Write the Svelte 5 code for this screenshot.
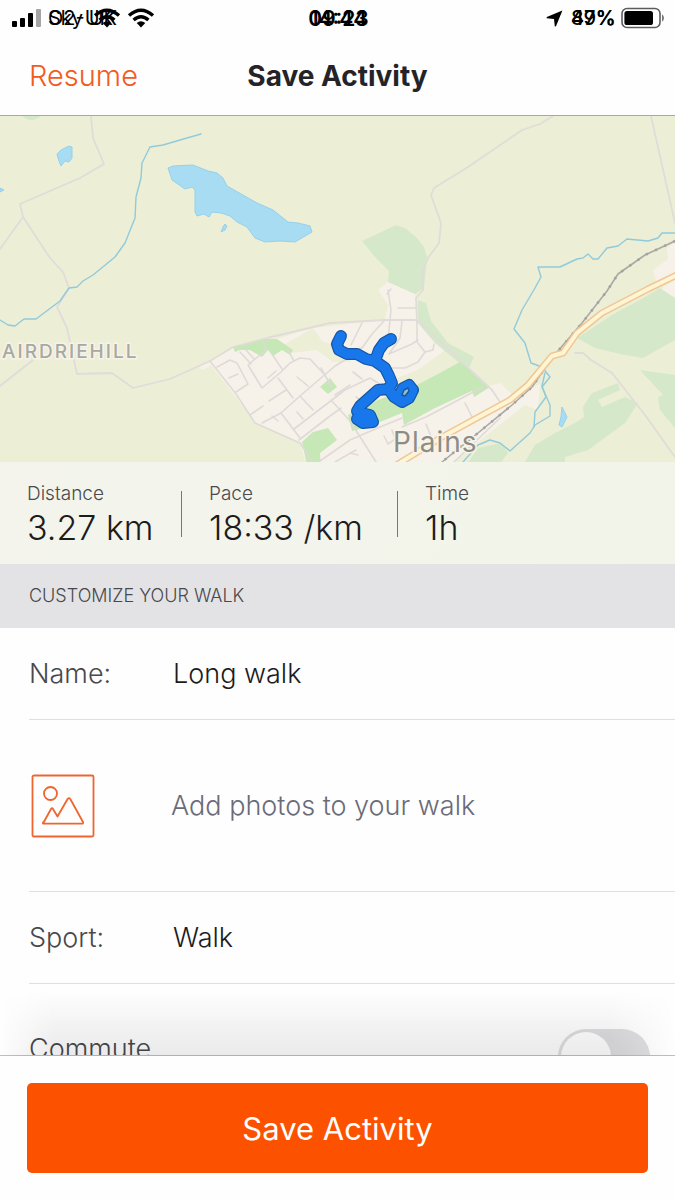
<script>
  let name = $state('Long walk');
  let commute = $state(false);

  const stats = [
    { label: 'Distance', value: '3.27 km' },
    { label: 'Pace', value: '18:33 /km' },
    { label: 'Time', value: '1h' }
  ];

  const streets = [
    'M210 361 236 394 255 423 300 443 318 470',
    'M217 367 230 360 237 363 248 384 236 392',
    'M229 378 238 374',
    'M240 352 251 364M246 350 254 359',
    'M263 339 266 350 248 365 262 388 281 372 290 363 300 358 310 359 323 373',
    'M268 378 276 371M272 354 282 369M288 350 294 361',
    'M262 423 281 413 300 396 335 366 350 357',
    'M278 378 293 398M297 377 308 386M269 401 286 390',
    'M250 415 263 406M300 396 313 410',
    'M281 413 300 438M294 429 345 390 370 378 386 388',
    'M299 440 330 416 341 408M331 400 350 421 376 462',
    'M297 412 303 419M321 368 331 386M272 416 278 421',
    'M320 461 350 440 380 427 402 418',
    'M335 395 350 385M353 372 362 379M356 397 364 403',
    'M388 340 391 310 388 290M398 308H416M391 289 387 294',
    'M384 321 372 334 362 348 350 350M362 323 351 345',
    'M402 321 400 338 389 354 412 344 418 340',
    'M417 322 417 342 425 352 433 350 434 344',
    'M390 368 405 368 418 362 425 352',
    'M384 436 388 444 397 438M392 430 396 441',
    'M426 424 432 439M465 403 472 417M492 390 500 402',
    'M402 427 426 417 483 387',
    'M335 462 356 450M350 453 358 455 M454 462 500 418'
  ];

  const route =
    'M341 336 337 344 339 350 347 354 357 354 366 359 375 361 379 350 384 343 391 339M375 361 385 368 389 376 392 383 388 389 378 390 369 398 360 406 357 411 362 414 357 419 363 423 373 422 370 415 361 413M388 388 394 397 402 402 409 398 413 390 409 385 403 388 400 394';
</script>

<svelte:head><title>Save Activity</title></svelte:head>

<div class="screen">
  <header>
    <div class="status">
      <div class="left">
        <svg class="bars" viewBox="0 0 30 20" aria-hidden="true">
          <rect x="0" y="13" width="5" height="6" rx="1" />
          <rect x="8" y="10" width="5" height="9" rx="1" />
          <rect x="16" y="5" width="5" height="14" rx="1" />
          <rect x="24" y="1" width="5" height="18" rx="1" fill="#a5a5a5" />
        </svg>
        <div class="stack">
          <span>Sky UK</span>
          <span>O2-UK</span>
          {@render wifi()}
        </div>
        {@render wifi()}
      </div>
      <div class="stack clock"><span>09:23</span><span>14:44</span></div>
      <div class="right">
        <svg class="arrow" viewBox="0 0 17 17" aria-hidden="true">
          <path d="M16.4.6 10 16.2 8.8 16.4 8 9 .6 8.2.8 7Z" />
        </svg>
        <div class="stack"><span>89%</span><span>47%</span></div>
        <svg class="battery" viewBox="0 0 44 22" aria-hidden="true">
          <rect x="1" y="1.5" width="38" height="19" rx="5" fill="none" stroke="#5c5c5e" stroke-width="1.6" />
          <rect x="3.4" y="4" width="28.6" height="14" rx="2.6" />
          <path d="M41 7.5c2.6 1 2.6 6 0 7Z" fill="#777" />
        </svg>
      </div>
    </div>
    <div class="nav">
      <button class="resume" type="button">Resume</button>
      <h1>Save Activity</h1>
      <span></span>
    </div>
  </header>

  <main>
    <svg class="map" viewBox="0 116 675 346" preserveAspectRatio="xMidYMid slice" role="img" aria-label="Route map">
      <rect y="100" width="675" height="400" fill="#eceed6" />
      <g fill="#f6f2ea">
        <path d="M199 368 210 361 233 348 280 338 313 328 385 320 388 305 378 290 388 282 415 294 418 320 425 330 445 350 436 360 418 370 398 378 402 413 473 390 500 383 515 397 540 384 538 410 525 405 442 470 308 470 300 443 256 423 211 365 203 370Z" />
        <path d="M653 270 668 259 667 248 675 242V298H665L662 288 675 280 656 281Z" />
      </g>
      <path d="M285 344 313 328 322 341 347 350 350 362 333 362 317 350 291 353Z" fill="#eceed6" />
      <path d="M398 378 418 370 445 350 462 361 430 376 400 390Z" fill="#eceed6" />
      <g fill="#d5e9ca">
        <path d="M362 241 396 225 405 228 416 237 424 247 427 257 424 288 415 294 388 282 389 271 375 257Z" />
        <path d="M418 300 426 303 431 321 448 343 474 357 468 370 435 343 418 323Z" />
        <path d="M612 315 645 297 660 288 675 298V340L643 358 620 354 595 348 577 338Z" />
        <path d="M640 370 675 375V428L660 410 658 397 663 395Z" />
        <path d="M583 407 592 393 618 383 620 390 598 400 602 407 625 397 638 403 625 423 588 450 565 457V470H520L535 445 555 433 575 423 584 417Z" />
        <path d="M463 470 478 448 502 443 508 453 495 470Z" />
        <path d="M22 116Q31 124 41 116Z" />
      </g>
      <g fill="#c6e7b6">
        <path d="M233 347 263 339 277 339 293 350 290 355 282 350 273 356 268 350 262 357 250 350 240 350 235 352Z" />
        <path d="M320 387 330 378 337 387 328 394Z" />
        <path d="M302 442 313 432 328 428 337 440 320 453 321 470H308Z" />
        <path d="M348 415 378 400 415 386 440 373 460 362 490 387 474 397 472 391 435 408 404 425 402 413 365 428 352 431Z" />
      </g>
      <g class="line" stroke="#e1dcda" stroke-width="1.8">
        <path d="M91 116 93 138 104 164 80 178 20 204 23 217 50 258 63 272 69 288 57 307 67 328 77 374 112 373 133 388 170 379 210 361 233 347 267 338 330 323 385 320H417L492 390" />
        <path d="M23 217 0 249M33 360 0 386M553 116 540 124 522 130 468 167 434 188 431 195 441 223 439 243 428 258 423 270 423 290 416 298 417 322M651 116 675 223M575 353 583 353 591 360 612 373 645 415 675 457" />
      </g>
      <g class="line" stroke="#dfdad8" stroke-width="1.6">
        {#each streets as d}<path {d} />{/each}
      </g>
      <g class="line" stroke="#91cadb" stroke-width="1.4">
        <path d="M201 134 187 138 163 145 150 147 142 163 141 178 136 197 135 218 125 243 115 257 93 275 83 281 77 287 69 288 60 301 36 319H24L15 326 8 325 0 320" />
        <path d="M675 233H662L658 238 648 241 627 239 618 246 607 248 598 259H593L588 254 583 258 577 259 560 267 538 267 541 277 535 288 522 310 514 329 525 343 531 363 542 367 550 377 542 387 550 405V416L535 425 530 433 510 451 500 443 490 440 478 445 463 462" />
        <path d="M545 373 542 386 546 397 535 412 534 427" />
      </g>
      <path class="line" d="M675 241 645 255 618 274 607 291 582 323 552 358 532 387 512 405 478 433 442 462" stroke="#aaa9a5" stroke-width="1.6" />
      <path class="line" d="M675 241 645 255 618 274 607 291 582 323 552 358 532 387 512 405 478 433 442 462" stroke="#a3a39e" stroke-width="2.6" stroke-dasharray="2 8" style:stroke-linecap="butt" />
      <g class="line">
        <path d="M685 271 648 289 602 313 577 333 563 353 552 356 528 385 510 400 442 437 398 464" stroke="#efc797" stroke-width="7" />
        <path d="M685 271 648 289 602 313 577 333 563 353 552 356 528 385 510 400 442 437 398 464" stroke="#fff5d2" stroke-width="4" />
      </g>
      <g fill="#a8dcf3" stroke="#95d0ec" stroke-width="1" stroke-linejoin="round">
        <path d="M57 154 61 150 69 146 72 147 72 158 69 162 65 161 61 166 59 161Z" />
        <path d="M168 168 173 166 193 165 208 171 217 173 223 178 227 186 257 203 273 210 288 222 298 223 310 226 312 232 295 242 280 241 265 242 255 238 247 227 237 222 230 216 221 213 212 212 209 217 204 214 197 216 195 212V190L192 187 185 189 172 180Z" />
        <path d="M225 224 227 226 225 230 221 232 223 227ZM0 188 4 190 0 192ZM562 407 567 417 562 427 559 425 561 417Z" />
      </g>
      <path class="line" d={route} stroke="#1556a5" stroke-width="12" />
      <path class="line" d={route} stroke="#1877ea" stroke-width="9.600" />
      <path d="M402 395 404 390 408 388 409 391 405 396Z" fill="#8fc0c4" stroke="#1556a5" stroke-width="1.400" stroke-linejoin="round" />
      <text class="place" x="2" y="358">AIRDRIEHILL</text>
      <text class="town" x="393" y="452">Plains</text>
    </svg>

    <dl class="stats">
      {#each stats as stat}
        <div class="stat">
          <dt>{stat.label}</dt>
          <dd>{stat.value}</dd>
        </div>
      {/each}
    </dl>

    <h2>CUSTOMIZE YOUR WALK</h2>

    <div class="form">
      <div class="row">
        <label for="name">Name:</label>
        <input id="name" type="text" bind:value={name} />
      </div>
      <button class="row photos" type="button">
        <svg viewBox="0 0 64 64" aria-hidden="true">
          <g fill="none" stroke="#f0642f" stroke-width="1.8" stroke-linejoin="round">
            <rect x="1.5" y="1.5" width="61" height="61" rx="1.5" />
            <circle cx="19.5" cy="19.5" r="6.5" />
            <path d="M12 49.5 20 35Q21 33.4 22 35L26.500 42.500 36.600 25Q38 23.200 39.300 25L52 48Q52.500 49.700 51 49.700H12.500Q11.500 49.700 12 48.500Z" />
          </g>
        </svg>
        <span>Add photos to your walk</span>
      </button>
      <div class="row">
        <span class="key">Sport:</span>
        <button class="value" type="button">Walk</button>
      </div>
      <div class="row commute">
        <label for="commute">Commute</label>
        <input id="commute" type="checkbox" role="switch" bind:checked={commute} />
      </div>
    </div>
  </main>

  <footer>
    <button type="button">Save Activity</button>
  </footer>
</div>

{#snippet wifi()}
  <svg class="wifi" viewBox="0 0 28 20" aria-hidden="true">
    <g fill="none" stroke="#000" stroke-width="3.4">
      <path d="M2 7.500Q14-3 26 7.500" />
      <path d="M6.600 12Q14 5.500 21.400 12" />
    </g>
    <path d="M9.700 15Q14 11.500 18.300 15L14 19.500Z" />
  </svg>
{/snippet}

<style>
  :global(body) {
    margin: 0;
    background: #fefefe;
  }
  .screen {
    display: flex;
    flex-direction: column;
    height: 100vh;
    font-family: Inter, 'Liberation Sans', sans-serif;
    font-size: 27px;
    font-weight: 300;
    color: #1c1c1e;
    background: #fefefe;
  }
  button,
  input {
    font: inherit;
    color: inherit;
    background: none;
    border: 0;
    padding: 0;
    margin: 0;
  }
  header {
    flex: none;
    border-bottom: 1px solid #a9aa9f;
  }
  .status,
  .nav {
    display: grid;
    grid-template-columns: 1fr auto 1fr;
    align-items: center;
  }
  .status {
    height: 36px;
    padding: 0 10px 0 12px;
    font-size: 20px;
    font-weight: 400;
    color: #000;
  }
  .left,
  .right {
    display: flex;
    align-items: center;
  }
  .left {
    gap: 6px;
  }
  .right {
    justify-content: flex-end;
    gap: 5px;
    font-weight: 500;
  }
  .stack {
    display: grid;
    align-items: center;
  }
  .stack > :global(*) {
    grid-area: 1 / 1;
  }
  .stack > :global(svg) {
    justify-self: end;
  }
  .left .stack {
    width: 73px;
    white-space: nowrap;
  }
  .clock {
    font-size: 21px;
    font-weight: 600;
    justify-items: center;
  }
  .bars {
    width: 30px;
    height: 20px;
  }
  .wifi {
    width: 28px;
    height: 20px;
  }
  .arrow {
    width: 17px;
    height: 17px;
    margin-right: 3px;
  }
  .battery {
    width: 44px;
    height: 22px;
  }
  .nav {
    height: 79px;
    padding: 0 29px;
  }
  .resume {
    justify-self: start;
    font-size: 29px;
    color: #f25b1c;
  }
  h1 {
    margin: 0;
    font-size: 28px;
    font-weight: 700;
    color: #242428;
  }
  main {
    flex: 1;
    min-height: 0;
    overflow-y: auto;
    scrollbar-width: none;
  }
  .map {
    display: block;
    width: 100%;
    height: 346px;
  }
  .line {
    fill: none;
    stroke-linecap: round;
    stroke-linejoin: round;
  }
  .place,
  .town {
    paint-order: stroke;
    stroke: #f6f4e9;
    stroke-width: 3px;
  }
  .place {
    font-size: 19px;
    font-weight: 500;
    letter-spacing: 2px;
    fill: #aaa8a3;
  }
  .town {
    font-size: 28px;
    font-weight: 400;
    letter-spacing: 1px;
    fill: #8e8c87;
  }
  .stats {
    display: grid;
    grid-template-columns: 182px 216px 1fr;
    align-content: center;
    margin: 0;
    height: 102px;
    padding: 4px 27px 0;
    box-sizing: border-box;
    background: linear-gradient(100deg, #f4f4ec, #f2f4ea);
  }
  .stat {
    position: relative;
    white-space: nowrap;
  }
  .stat:not(:last-child)::after {
    content: '';
    position: absolute;
    right: 27px;
    top: 10px;
    width: 1px;
    height: 46px;
    background: #77777a;
  }
  dt {
    font-size: 19px;
    line-height: 26px;
    color: #4a4a4f;
  }
  dd {
    margin: 0;
    font-size: 34px;
    line-height: 42px;
  }
  h2 {
    margin: 0;
    padding: 0 29px;
    font-size: 18px;
    font-weight: 300;
    line-height: 64px;
    color: #48484d;
    background: #e3e3e5;
  }
  .form {
    padding-left: 29px;
  }
  .row {
    display: flex;
    align-items: center;
    width: 100%;
    height: 92px;
    box-sizing: border-box;
    border-bottom: 1px solid #dedee8;
  }
  .row label,
  .key {
    width: 144px;
    color: #48484d;
  }
  .row input[type='text'] {
    flex: 1;
    min-width: 0;
    outline: 0;
  }
  .row.photos {
    height: 172px;
    padding-left: 2px;
    color: #6b6b78;
  }
  .photos svg {
    width: 64px;
    height: 64px;
    margin-right: 76px;
  }
  .value {
    flex: 1;
    text-align: left;
  }
  .row.commute {
    height: 146px;
    padding-right: 25px;
    justify-content: space-between;
    border-bottom: 0;
  }
  .commute label {
    padding-bottom: 18px;
  }
  .commute input {
    appearance: none;
    width: 92px;
    height: 56px;
    border-radius: 28px;
    padding: 3px;
    box-sizing: border-box;
    background: #dedee1;
  }
  .commute input::before {
    content: '';
    display: block;
    width: 50px;
    height: 50px;
    border-radius: 50%;
    background: #fff;
  }
  .commute input:checked::before {
    margin-left: auto;
  }
  footer {
    position: relative;
    flex: none;
    padding: 27px;
    border-top: 1px solid #bfbfc1;
    background: #fefefe;
  }
  footer::before {
    content: '';
    position: absolute;
    inset: -64px 0 100%;
    pointer-events: none;
    background: linear-gradient(to top, rgb(0 0 0 / 8%), rgb(0 0 0 / 5%) 40%, transparent);
    mask-image: linear-gradient(to right, transparent, #000 8%, #000 90%, transparent);
  }
  footer button {
    display: block;
    width: 100%;
    height: 90px;
    border-radius: 5px;
    font-size: 31px;
    font-weight: 400;
    color: #fff;
    background: #fc5200;
  }
</style>
